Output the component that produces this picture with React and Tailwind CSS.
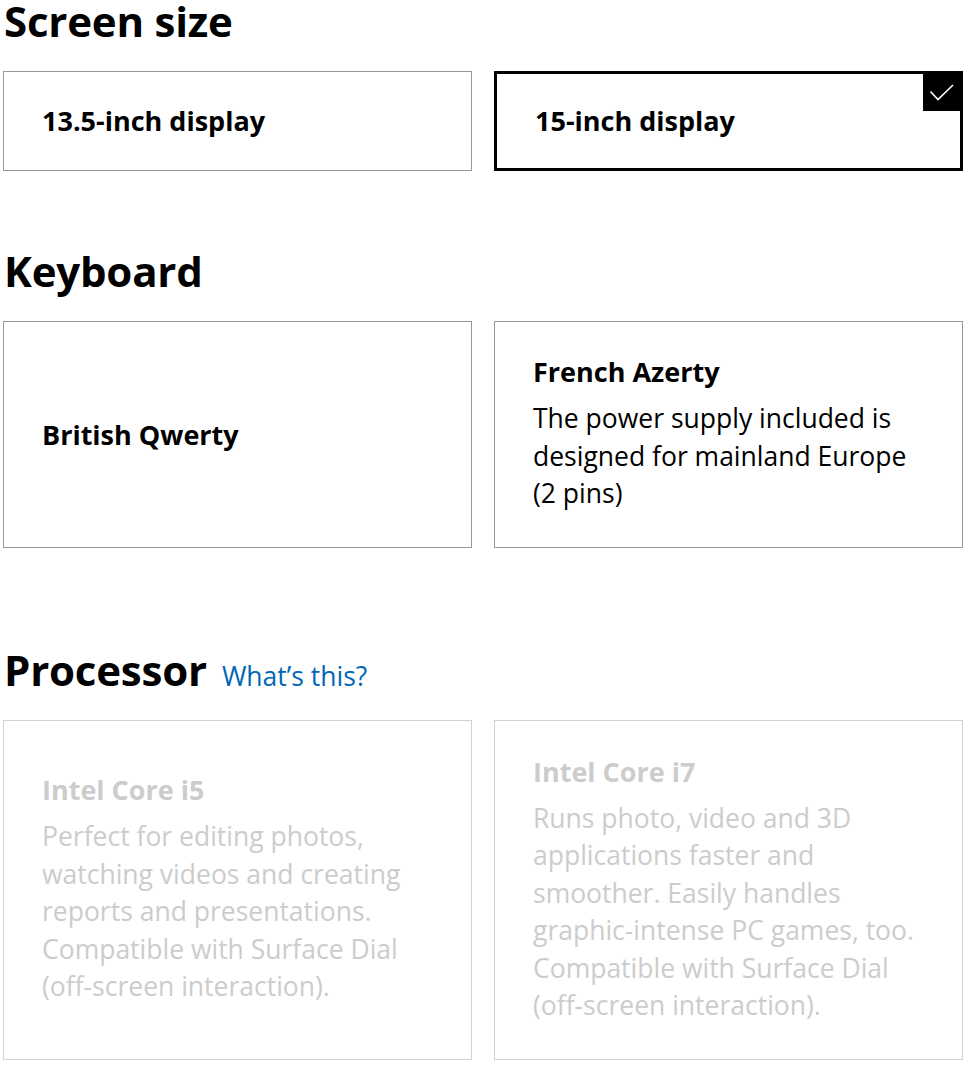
import React from 'react';

const font = { fontFamily: '"Open Sans", "Noto Sans", sans-serif' };

const Check = () => (
  <div className="absolute top-0 right-0 h-[37px] w-[37px] bg-black">
    <svg width="37" height="37" viewBox="0 0 37 37" fill="none">
      <path d="M7.5 17.5 L15 25.5 L30 11" stroke="white" strokeWidth="1.6" />
    </svg>
  </div>
);

const Heading = ({ children, className = '' }) => (
  <h2 className={`flex items-baseline gap-[15px] pl-[1px] text-[42px] leading-[40px] font-bold tracking-[-0.2px] text-black ${className}`}>
    {children}
  </h2>
);

const Option = ({ title, lines, selected, disabled, className = '' }) => (
  <div
    className={`relative flex items-center pl-[38px] pr-[20px] ${
      selected ? 'border-[3px] border-black' : disabled ? 'border border-[#d2d2d2]' : 'border border-[#999999]'
    } ${className}`}
  >
    {selected && <Check />}
    <div className={disabled ? 'text-[#cccccc]' : 'text-black'}>
      <div className="text-[27px] leading-[32px] font-bold">{title}</div>
      {lines && (
        <p className="mt-[12px] text-[26.5px] leading-[37.5px] font-normal">
          {lines.map((l, i) => (
            <span key={i} className="block whitespace-nowrap">{l}</span>
          ))}
        </p>
      )}
    </div>
  </div>
);

export default function App() {
  return (
    <div className="min-h-screen bg-white pl-[3px] pr-[6px]" style={font}>
      <Heading className="pt-[1px]">Screen size</Heading>
      <div className="mt-[30px] grid grid-cols-2 gap-[22px]">
        <Option title="13.5-inch display" className="h-[100px]" />
        <Option title="15-inch display" selected className="h-[100px]" />
      </div>

      <Heading className="mt-[80px]">Keyboard</Heading>
      <div className="mt-[30px] grid grid-cols-2 gap-[22px]">
        <Option title="British Qwerty" className="h-[227px]" />
        <Option
          title="French Azerty"
          lines={['The power supply included is', 'designed for mainland Europe', '(2 pins)']}
          className="h-[227px]"
        />
      </div>

      <Heading className="mt-[102px]">
        Processor
        <a href="#" className="text-[26.5px] leading-[32px] font-normal tracking-normal text-[#0067b8]">What’s this?</a>
      </Heading>
      <div className="mt-[28px] grid grid-cols-2 gap-[22px]">
        <Option
          disabled
          title="Intel Core i5"
          lines={[
            'Perfect for editing photos,',
            'watching videos and creating',
            'reports and presentations.',
            'Compatible with Surface Dial',
            '(off-screen interaction).',
          ]}
          className="h-[340px]"
        />
        <Option
          disabled
          title="Intel Core i7"
          lines={[
            'Runs photo, video and 3D',
            'applications faster and',
            'smoother. Easily handles',
            'graphic-intense PC games, too.',
            'Compatible with Surface Dial',
            '(off-screen interaction).',
          ]}
          className="h-[340px]"
        />
      </div>
    </div>
  );
}
